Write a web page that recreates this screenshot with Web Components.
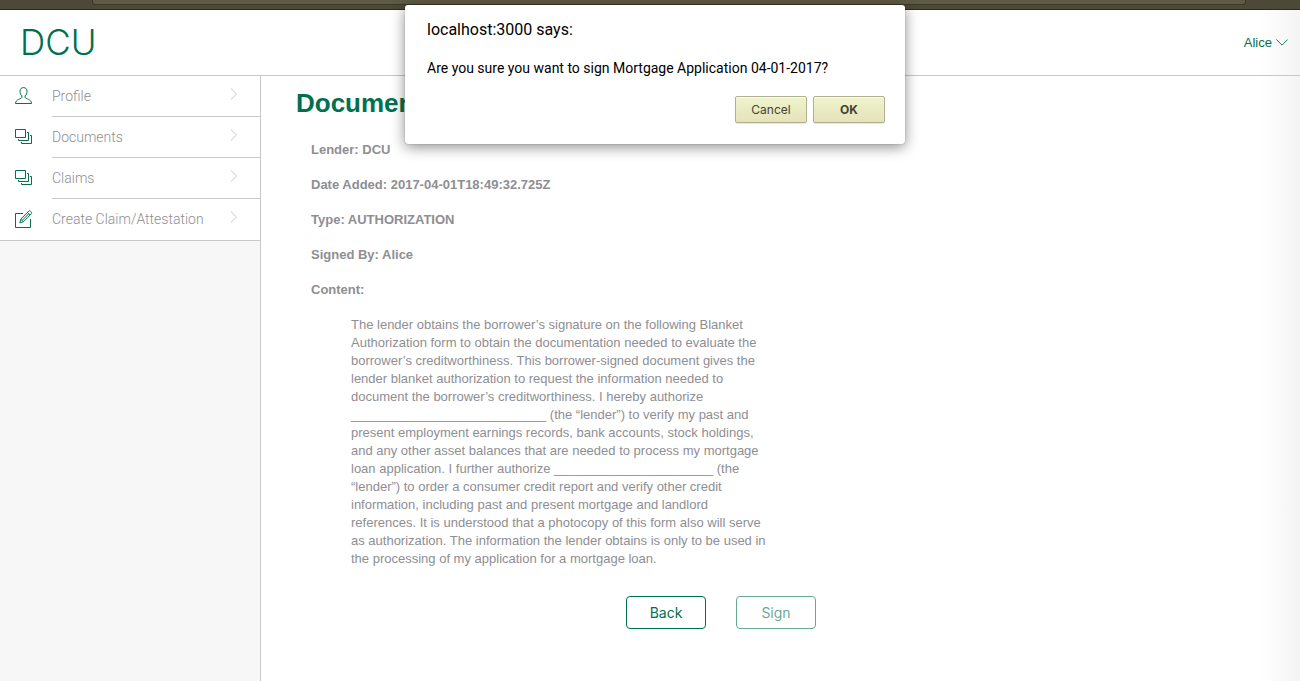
<!DOCTYPE html>
<html lang="en">
<head>
<meta charset="utf-8">
<title>DCU</title>
<style>
html, body { margin: 0; height: 100%; }
body { font: 13px/18px "Liberation Sans", Arial, sans-serif; color: #8e8e93; background: #fff; }
</style>
</head>
<body>
<dcu-app></dcu-app>
<script>
class Base extends HTMLElement {
  constructor() {
    super();
    this.attachShadow({ mode: 'open' }).innerHTML = this.render();
  }
}

customElements.define('browser-edge', class extends Base {
  render() {
    return `<style>
      :host { display: block; box-sizing: border-box; height: 10px; padding: 0 54px 0 92px; background: #4d4939; border-bottom: 1px solid #2e2b21; }
      div { box-sizing: border-box; height: 5px; background: #5e5a44; border: 1px solid #3b3829; border-top: 0; border-radius: 0 0 3px 3px; }
    </style><div></div>`;
  }
});

customElements.define('app-header', class extends Base {
  render() {
    return `<style>
      :host { display: flex; align-items: center; justify-content: space-between; box-sizing: border-box; height: 66px; padding: 0 12px 0 20px; border-bottom: 1px solid #c7c7cc; color: #00704f; }
      h1 { margin: 0; padding-bottom: 2px; font: 300 35px/62px Inter, sans-serif; }
      a { display: flex; align-items: center; gap: 4px; color: inherit; text-decoration: none; }
      svg { display: block; }
    </style>
    <h1>DCU</h1>
    <a href="#"><span>Alice</span><svg width="12" height="8" viewBox="0 0 12 8" fill="none" stroke="currentColor" stroke-width="0.9"><path d="M.4 .5 6 6.100 11.600 .5"/></svg></a>`;
  }
});

const ICONS = {
  user: '<path d="M8.500 .6c2.200 0 3.500 1.500 3.500 3.700 0 2-.7 3.500-1.900 4.500v1.700c.5 1.300 6.400 1.800 6.400 6H.5c0-4.200 5.900-4.700 6.400-6V8.800C5.700 7.800 5 6.300 5 4.300 5 2.100 6.300.6 8.500 .6z"/>',
  stack: '<path d="M.5 1.500h10v8H.5zM12 4.500h1.500v8h-10V11M15 7.500h1.500v8h-10V14"/>',
  edit: '<path d="M8 3.500H.5v14h15V9M4.800 12.800l1-3.600L13.900 1c.4-.4.9-.4 1.300 0l1.300 1.300c.4.4.4.9 0 1.300L8.400 11.800zM5.800 9.200l2.600 2.600M12.500 2.400l2.600 2.600M7.200 10.400l6.600-6.700"/>'
};

customElements.define('nav-item', class extends HTMLElement {
  constructor() {
    super();
    this.attachShadow({ mode: 'open' }).innerHTML = `<style>
      :host { display: block; background: #fff; }
      a { display: flex; height: 41px; color: inherit; text-decoration: none; }
      .icon { flex: none; width: 52px; display: flex; align-items: center; box-sizing: border-box; padding: 0 0 1px 15px; color: #00704f; }
      .text { flex: 1; display: flex; align-items: center; justify-content: space-between; padding-right: 22px; border-bottom: 1px solid #c7c7cc; }
      :host([last]) a { border-bottom: 1px solid #c7c7cc; }
      :host([last]) .text { border-bottom-color: transparent; }
      .label { font: 300 14px/20px Roboto, sans-serif; }
      .chev { margin-bottom: 4px; }
      svg { display: block; }
    </style>
    <a href="#"><span class="icon"><svg width="18" height="18" viewBox="0 0 18 18" fill="none" stroke="currentColor" stroke-width="1">${ICONS[this.getAttribute('icon')]}</svg></span>
    <span class="text"><span class="label"><slot></slot></span><svg class="chev" width="8" height="12" viewBox="0 0 8 12" fill="none" stroke="#c7c7cc"><path d="M1 .6 6.500 6 1 11.400"/></svg></span></a>`;
  }
});

customElements.define('side-nav', class extends Base {
  render() {
    return `<style>
      :host { display: block; flex: none; box-sizing: border-box; width: 261px; border-right: 1px solid #c7c7cc; background: #f7f7f7; }
      nav { display: flex; flex-direction: column; }
    </style>
    <nav>
      <nav-item icon="user">Profile</nav-item>
      <nav-item icon="stack">Documents</nav-item>
      <nav-item icon="stack">Claims</nav-item>
      <nav-item icon="edit" last>Create Claim/Attestation</nav-item>
    </nav>`;
  }
});

customElements.define('outline-button', class extends HTMLElement {
  constructor() {
    super();
    this.attachShadow({ mode: 'open', delegatesFocus: true }).innerHTML = `<style>
      :host { display: block; }
      button { display: block; box-sizing: border-box; width: 80px; height: 33px; padding: 0; border: 1px solid #00704f; border-radius: 4px; background: #fff; color: #00704f; font: 400 14px/20px Inter, sans-serif; }
      :host([faded]) button { opacity: .6; }
    </style><button type="button"><slot></slot></button>`;
  }
});

customElements.define('document-view', class extends Base {
  render() {
    return `<style>
      :host { display: block; flex: 1; min-width: 0; padding: 12px 35px; }
      h2 { margin: 0; color: #00704f; font-size: 26px; line-height: 30px; }
      .fields { display: flex; flex-direction: column; gap: 17px; padding: 23px 15px 0; }
      h3 { margin: 0; font-size: 13px; line-height: 18px; }
      p { margin: 0 40px; max-width: 420px; }
      .actions { display: flex; gap: 30px; justify-content: flex-end; max-width: 520px; padding-top: 28px; }
    </style>
    <h2>Document</h2>
    <section class="fields">
      <h3>Lender: DCU</h3>
      <h3>Date Added: 2017-04-01T18:49:32.725Z</h3>
      <h3>Type: AUTHORIZATION</h3>
      <h3>Signed By: Alice</h3>
      <h3>Content:</h3>
      <p>The lender obtains the borrower’s signature on the following Blanket Authorization form to obtain the documentation needed to evaluate the borrower’s creditworthiness. This borrower-signed document gives the lender blanket authorization to request the information needed to document the borrower’s creditworthiness. I hereby authorize ${'_'.repeat(27)} (the “lender”) to verify my past and present employment earnings records, bank accounts, stock holdings, and any other asset balances that are needed to process my mortgage loan application. I further authorize ${'_'.repeat(22)} (the “lender”) to order a consumer credit report and verify other credit information, including past and present mortgage and landlord references. It is understood that a photocopy of this form also will serve as authorization. The information the lender obtains is only to be used in the processing of my application for a mortgage loan.</p>
    </section>
    <div class="actions"><outline-button>Back</outline-button><outline-button faded>Sign</outline-button></div>`;
  }
});

customElements.define('confirm-dialog', class extends Base {
  render() {
    return `<style>
      :host { display: block; position: absolute; z-index: 2; top: 5px; left: calc(50% - 245px); box-sizing: border-box; width: 500px; padding: 15px 20px 21px 22px; background: #fff; border-radius: 3px; color: #000; font-family: Inter, sans-serif; box-shadow: 0 0 1px rgba(0,0,0,.6), 0 3px 14px rgba(0,0,0,.45); }
      h2 { margin: 0; font: 400 16px/20px Roboto, sans-serif; }
      p { margin: 19px 0; font: 400 14px/18px Roboto, sans-serif; }
      .row { display: flex; justify-content: flex-end; gap: 6px; }
      button { box-sizing: border-box; width: 72px; height: 27px; padding: 0; border: 1px solid #b0af90; border-radius: 2px; background: linear-gradient(#eff3cd, #e5e3b8); color: #444237; font: 400 12px/16px Inter, sans-serif; box-shadow: 0 1px 1px rgba(0,0,0,.1), inset 0 1px 1px rgba(255,255,255,.7); }
      .ok { font-weight: 700; }
    </style>
    <div role="dialog" aria-labelledby="t">
      <h2 id="t">localhost:3000 says:</h2>
      <p>Are you sure you want to sign Mortgage Application 04-01-2017?</p>
      <div class="row"><button type="button">Cancel</button><button type="button" class="ok">OK</button></div>
    </div>`;
  }
});

customElements.define('dcu-app', class extends Base {
  render() {
    return `<style>
      :host { display: flex; flex-direction: column; position: relative; min-height: 100%; }
      .page { flex: 1; display: flex; flex-direction: column; background: linear-gradient(to left, #f4f4f4, #fff 40px); }
      main { flex: 1; display: flex; }
    </style>
    <browser-edge></browser-edge>
    <div class="page"><app-header></app-header><main><side-nav></side-nav><document-view></document-view></main></div>
    <confirm-dialog></confirm-dialog>`;
  }
});
</script>
</body>
</html>
